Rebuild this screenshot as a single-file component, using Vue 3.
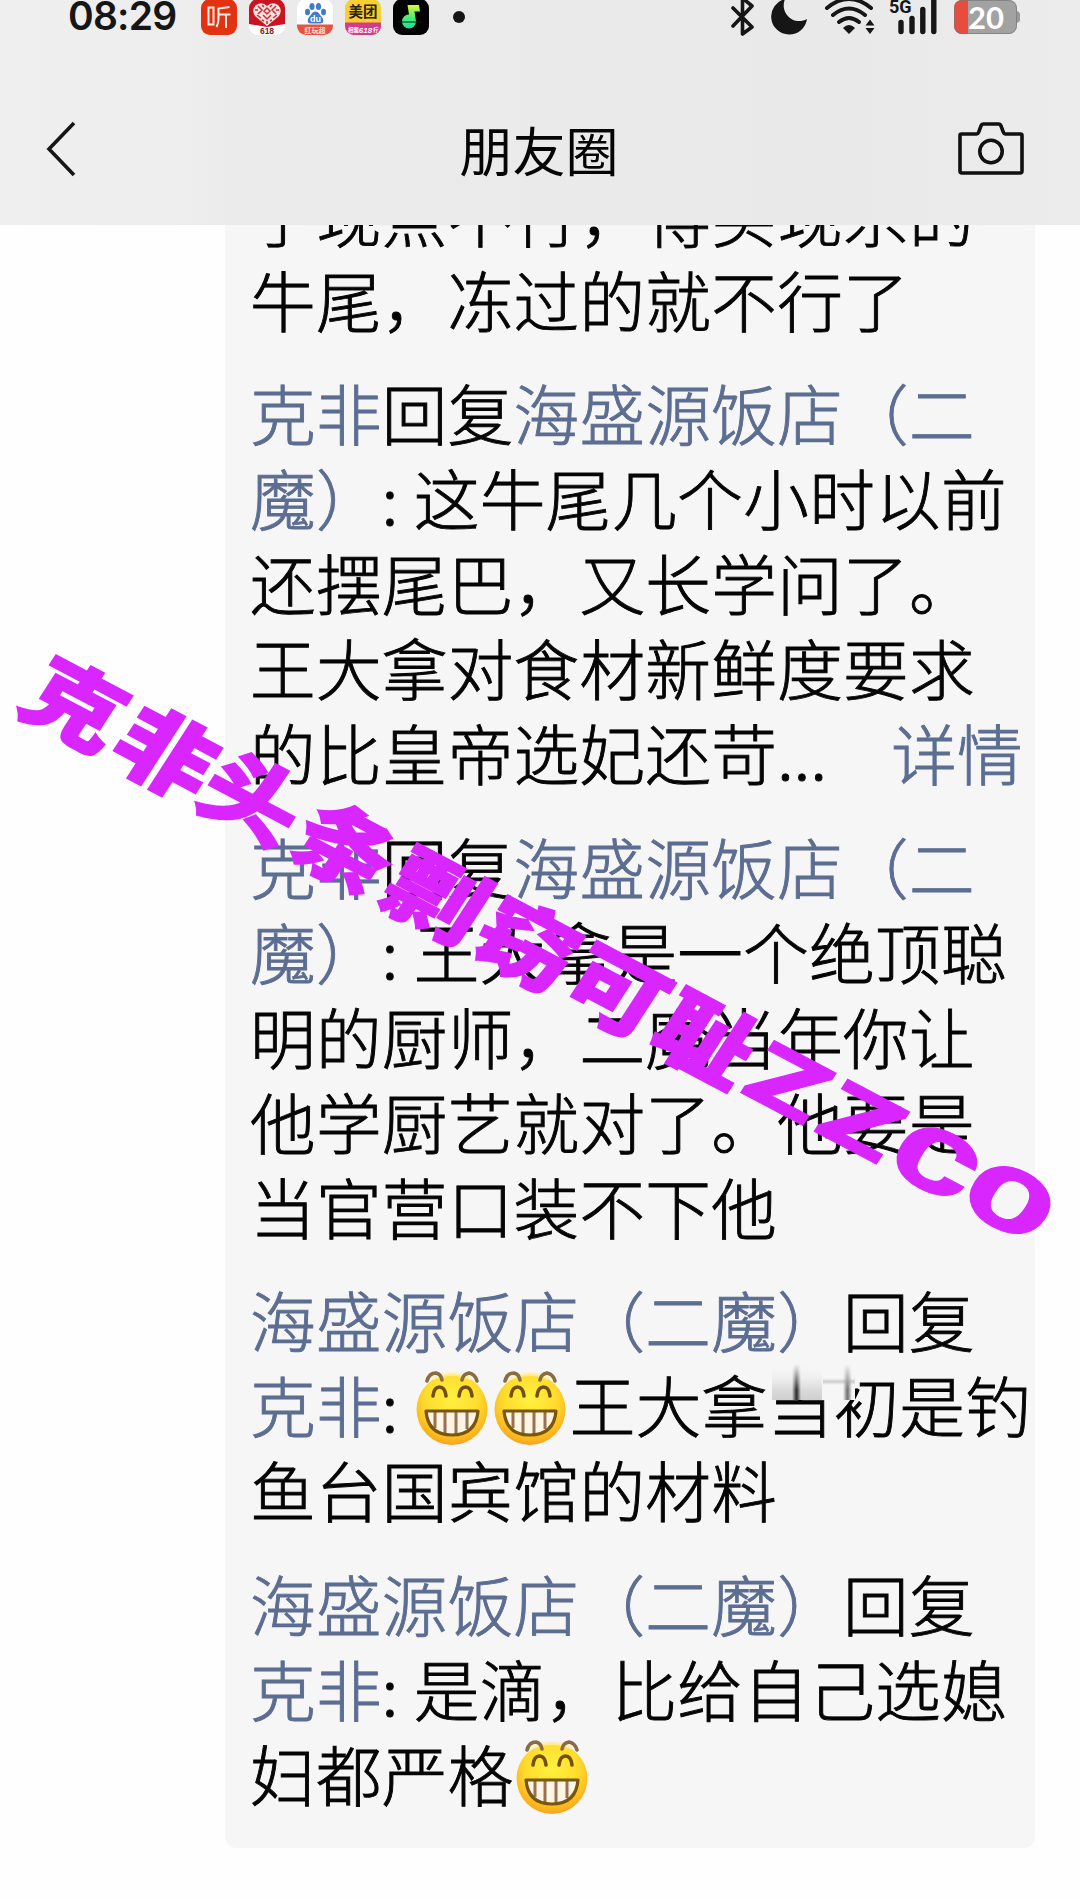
<script setup>
const comments = [
  {
    id: 1,
    lines: [
      [{ t: '了现点不行，得买现杀的' }],
      [{ t: '牛尾，冻过的就不行了' }]
    ]
  },
  {
    id: 2,
    lines: [
      [{ t: '克非', type: 'name' }, { t: '回复' }, { t: '海盛源饭店（二', type: 'name' }],
      [{ t: '魔）', type: 'name' }, { t: ':', type: 'colon' }, { t: '这牛尾几个小时以前' }],
      [{ t: '还摆尾巴，又长学问了。' }],
      [{ t: '王大拿对食材新鲜度要求' }],
      [{ t: '的比皇帝选妃还苛' }, { t: '...', type: 'dots' }, { t: '详情', type: 'more' }]
    ]
  },
  {
    id: 3,
    lines: [
      [{ t: '克非', type: 'name' }, { t: '回复' }, { t: '海盛源饭店（二', type: 'name' }],
      [{ t: '魔）', type: 'name' }, { t: ':', type: 'colon' }, { t: '王大拿是一个绝顶聪' }],
      [{ t: '明的厨师，二魔当年你让' }],
      [{ t: '他学厨艺就对了。他要是' }],
      [{ t: '当官营口装不下他' }]
    ]
  },
  {
    id: 4,
    lines: [
      [{ t: '海盛源饭店（二魔）', type: 'name' }, { t: '回复' }],
      [{ t: '克非', type: 'name' }, { t: ':', type: 'colon' }, { type: 'emoji' }, { type: 'emoji' }, { t: '王大拿' }, { t: '当初', type: 'smudge' }, { t: '是钓' }],
      [{ t: '鱼台国宾馆的材料' }]
    ]
  },
  {
    id: 5,
    lines: [
      [{ t: '海盛源饭店（二魔）', type: 'name' }, { t: '回复' }],
      [{ t: '克非', type: 'name' }, { t: ':', type: 'colon' }, { t: '是滴，比给自己选媳' }],
      [{ t: '妇都严格' }, { type: 'emoji' }]
    ]
  }
]

// distance of each glyph along the watermark's baseline
const watermark = [
  { t: '克', x: 0 },
  { t: '非', x: 103 },
  { t: '头', x: 201 },
  { t: '条', x: 306 },
  { t: '剽', x: 409 },
  { t: '窃', x: 512 },
  { t: '可', x: 613 },
  { t: '耻', x: 714 },
  { t: 'Z', x: 807, latin: true },
  { t: 'Z', x: 890, latin: true },
  { t: 'C', x: 974, latin: true },
  { t: 'O', x: 1058, latin: true }
]
</script>

<template>
  <div class="screen">
    <header class="top">
      <div class="status">
        <span class="time">08:29</span>
        <div class="apps">
          <svg class="app" viewBox="0 0 36 36">
            <rect width="36" height="36" rx="9" fill="#e23212" />
            <path d="M7.500 8.500h5v17h-5zM28.500 8L17.500 9.500V20q0 4-2 8M17.500 15.500h12M25 15.500V29" fill="none" stroke="#fff0e6" stroke-width="2" />
          </svg>
          <svg class="app" viewBox="0 0 36 36">
            <rect width="36" height="36" rx="9" fill="#fff" />
            <path d="M0 25V9a9 9 0 0 1 9-9h18a9 9 0 0 1 9 9v16L18 28z" fill="#c91421" />
            <path d="M18 27L6 17Q2 11 7 6q6-4 11 1 5-5 11-1 5 5 1 11z" fill="#fbe4df" />
            <path d="M9 7l4 4-4 4M27 7l-4 4 4 4M14 16l4 4 4-4M18 22v3M8 16l4 3M28 16l-4 3M15 12l3-3 3 3-3 3zM13 6l2 2M23 6l-2 2M6 11h3M30 11h-3M13 21l2 1M23 21l-2 1" fill="none" stroke="#cf2a35" stroke-width="1.500" />
            <text x="18" y="34.500" class="tiny" font-size="8.500" fill="#7c1b1b">618</text>
          </svg>
          <svg class="app" viewBox="0 0 36 36">
            <rect width="36" height="36" rx="9" fill="#fff" />
            <g fill="#3f7cd0">
              <ellipse cx="10.500" cy="13" rx="2.500" ry="3.200" />
              <ellipse cx="15" cy="7.500" rx="2.600" ry="3.500" />
              <ellipse cx="21.500" cy="7.500" rx="2.600" ry="3.500" />
              <ellipse cx="26.500" cy="13" rx="2.500" ry="3.200" />
              <path d="M18.500 12.500c3 0 4 3 6 5s3 7-1 7h-10c-4 0-3-5-1-7s3-5 6-5z" />
            </g>
            <text x="18.500" y="23" class="tiny" font-size="9" fill="#fff">du</text>
            <path d="M0 25.500h36V27a9 9 0 0 1-9 9H9a9 9 0 0 1-9-9z" fill="#e45443" />
            <text x="18" y="34" class="tiny" font-size="7" fill="#ffe3d8">红玩超</text>
          </svg>
          <svg class="app" viewBox="0 0 36 36">
            <rect width="36" height="36" rx="9" fill="#f7cf33" />
            <text x="18" y="18" class="tiny" font-size="14.500" fill="#2c2208">美团</text>
            <path d="M0 23.500h36V27a9 9 0 0 1-9 9H9a9 9 0 0 1-9-9z" fill="#d43a8c" />
            <text x="8.500" y="33" class="tiny" font-size="5.500" fill="#fff">相聚</text>
            <text x="20.500" y="34" class="tiny" font-size="8" font-style="italic" fill="#fff">618</text>
            <text x="31" y="33" class="tiny" font-size="5.500" fill="#fff">疗</text>
          </svg>
          <svg class="app" viewBox="0 0 36 36">
            <defs>
              <linearGradient id="note" x1="0" y1="0" x2="0" y2="1">
                <stop offset="0" stop-color="#dcf53a" />
                <stop offset="0.550" stop-color="#46ee77" />
                <stop offset="1" stop-color="#18e0a0" />
              </linearGradient>
            </defs>
            <rect width="36" height="36" rx="9" fill="#030303" />
            <path d="M14.500 6h11.500l1 6.500h-5.500l1.500 10a7 7 0 1 1-7-7z" fill="url(#note)" />
            <path d="M6 23h22" stroke="#062c16" stroke-width="1" />
          </svg>
        </div>
        <span class="dot"></span>
        <svg class="system" viewBox="725 0 300 38">
          <path d="M733 8l19 19-9.500 7V-2l9.500 8-19 20" fill="none" stroke="#161616" stroke-width="3.600" stroke-linejoin="round" stroke-linecap="round" />
          <path d="M785-1a18 18 0 1 0 22 20c-7 4-16 2-20-4-4-5-4-11-2-16z" fill="#161616" />
          <g fill="none" stroke="#161616" stroke-width="4" stroke-linecap="round">
            <path d="M827 8q22-18 44 0" />
            <path d="M833 15q16-13 32 0" />
            <path d="M839 22q10-8 20 0" />
          </g>
          <path d="M843 28q6-6 12 0l-6 6z" fill="#161616" />
          <path d="M865.500 25.500l4.500-6 4.500 6zM865.500 28l4.500 6 4.500-6z" fill="#161616" />
          <text x="889" y="13" class="fiveg">5G</text>
          <path d="M901 22.500v9M912 18.500v13M922.800 9.500v22M933.800 0v31.500" stroke="#161616" stroke-width="5.400" stroke-linecap="round" />
          <rect x="954" y="0" width="63" height="34" rx="8" fill="#a2a2a2" />
          <path d="M968 0v34h-6a8 8 0 0 1-8-8V8a8 8 0 0 1 8-8z" fill="#e84c3d" />
          <rect x="954.500" y="0.500" width="62" height="33" rx="8" fill="none" stroke="#777" stroke-opacity="0.700" />
          <path d="M1017 11q3 1 3 3v6q0 2-3 3z" fill="#999" />
          <text x="986" y="28.500" class="level">20</text>
        </svg>
      </div>
      <div class="nav">
        <svg class="back" viewBox="0 0 32 56">
          <path d="M29 2L4 28l25 26" fill="none" stroke="#161616" stroke-width="3.600" />
        </svg>
        <h1 class="title">朋友圈</h1>
        <svg class="camera" viewBox="0 0 66 54">
          <path d="M3.500 12h15q1.500 0 2-1.500L23 4q.7-2 2.500-2h15q1.800 0 2.500 2l2.500 6.500q.5 1.500 2 1.500h15q1.500 0 1.500 1.500V49q0 2-2 2H4q-2 0-2-2V13.500Q2 12 3.500 12z" fill="none" stroke="#111" stroke-width="3.600" />
          <circle cx="33" cy="29.500" r="11.200" fill="none" stroke="#111" stroke-width="3.600" />
        </svg>
      </div>
    </header>

    <main class="feed">
      <section class="panel">
        <div v-for="comment in comments" :key="comment.id" class="comment">
          <div v-for="(line, i) in comment.lines" :key="i" class="line">
            <template v-for="(part, j) in line" :key="j">
              <svg v-if="part.type === 'emoji'" class="emoji" viewBox="0 0 78 78">
                <defs>
                  <radialGradient id="face" cx="0.500" cy="0.350" r="0.680">
                    <stop offset="0" stop-color="#fff13e" />
                    <stop offset="0.550" stop-color="#ffdc2e" />
                    <stop offset="0.850" stop-color="#fbb51e" />
                    <stop offset="1" stop-color="#ef9d20" />
                  </radialGradient>
                </defs>
                <circle cx="36" cy="39.500" r="35.500" fill="url(#face)" />
                <path d="M18 8q18-8 36 0" fill="none" stroke="#ffefb0" stroke-width="4" stroke-linecap="round" opacity="0.700" />
                <g fill="none" stroke="#72500f" stroke-width="3.600" stroke-linecap="round">
                  <path d="M11 11Q13 3 20 3q5 1 6 7" stroke="#8a6c43" />
                  <path d="M46 10q1-6 7-7 6 1 8 8" stroke="#8a6c43" />
                  <path d="M17 26q1-9 6.500-9T30 26" />
                  <path d="M43 26q1-9 6.500-9T56 26" />
                </g>
                <path d="M10 41h52q-2 24-26 24T10 41z" fill="#fff5e5" />
                <path d="M19 42v16M29 42v22M40 42v22M51 42v17" stroke="#987150" stroke-width="3" />
                <path d="M10 41h52q-2 24-26 24T10 41z" fill="none" stroke="#7a560d" stroke-width="3.200" stroke-linejoin="round" />
              </svg>
              <span v-else :class="part.type">{{ part.t }}</span>
            </template>
          </div>
        </div>
      </section>
    </main>

    <svg class="watermark" viewBox="0 0 1080 1899">
      <g transform="translate(75 705) rotate(27.900) skewX(-5)">
        <text
          v-for="(glyph, i) in watermark"
          :key="i"
          :transform="glyph.latin ? `translate(${glyph.x} 31) scale(1.45 1)` : `translate(${glyph.x} 32) scale(1.14 1)`"
          :class="{ latin: glyph.latin }"
        >{{ glyph.t }}</text>
      </g>
    </svg>
  </div>
</template>

<style>
body {
  margin: 0;
  background: #fefefe;
}
</style>

<style scoped>
.screen {
  position: relative;
  width: 1080px;
  height: 1899px;
  overflow: hidden;
  display: flex;
  flex-direction: column;
  background: #fefefe;
  font-family: "Noto Sans CJK SC", sans-serif;
  color: #050505;
}

.top {
  flex: none;
  height: 225px;
  background: linear-gradient(90deg, #efefef 0, #ededed 200px, #ebebeb 230px, #e9e9e9 850px, #ececec 1080px);
  position: relative;
  z-index: 1;
}

.status {
  display: flex;
  height: 70px;
  align-items: flex-start;
}

.time {
  width: 132px;
  margin-left: 68px;
  font: 600 39px/31px Inter, sans-serif;
  letter-spacing: -0.8px;
  color: #161616;
}

.apps {
  display: flex;
  gap: 12px;
  margin: -1px 0 0 1px;
}

.app {
  width: 36px;
  height: 36px;
}

.tiny {
  font-family: "Liberation Sans", "Noto Sans CJK SC", sans-serif;
  font-weight: 700;
  text-anchor: middle;
}

.dot {
  width: 12px;
  height: 12px;
  margin: 11px 0 0 24px;
  border-radius: 50%;
  background: #161616;
}

.system {
  width: 300px;
  height: 38px;
  margin-left: 260px;
}

.fiveg {
  font: 700 18px Roboto, sans-serif;
  fill: #161616;
}

.level {
  font: 700 31px Lato, sans-serif;
  fill: #fff;
  text-anchor: middle;
}

.nav {
  display: flex;
  align-items: center;
  justify-content: space-between;
  height: 100px;
  margin-top: 29px;
  padding: 0 56px 0 45px;
}

.back {
  width: 32px;
  height: 56px;
}

.title {
  margin: 0 0 0 43px;
  font-size: 53px;
  line-height: 80px;
  font-weight: 400;
}

.camera {
  width: 66px;
  height: 54px;
}

.feed {
  flex: none;
  display: flex;
  padding-left: 225px;
}

.panel {
  width: 785px;
  height: 1677px;
  margin-top: -54px;
  padding-left: 25px;
  border-radius: 0 0 12px 12px;
  background: #f6f6f6;
}

.comment {
  margin-bottom: 28.4px;
}

.line {
  display: flex;
  height: 85px;
  line-height: 86px;
  font-size: 65.6px;
  font-weight: 300;
  -webkit-text-stroke: 0.9px currentColor;
  letter-spacing: 0.3px;
  white-space: nowrap;
  text-spacing-trim: space-all;
}

.name,
.more {
  color: #5c6d92;
}

.colon {
  width: 32px;
}

.dots {
  width: 114px;
}

.emoji {
  position: relative;
  left: 2px;
  flex: none;
  width: 78px;
  height: 78px;
  margin-top: 9px;
}

.smudge {
  position: relative;
}

/* smeared patch over the upper half of the two characters */
.smudge::before {
  content: "";
  position: absolute;
  left: 0;
  top: 3px;
  width: 88px;
  height: 36px;
  background:
    linear-gradient(#f6f6f6, rgba(246, 246, 246, 0)) 0 0 / 100% 26px no-repeat,
    linear-gradient(90deg, transparent, #333 45%, #333 55%, transparent) 25px 0 / 9px 36px no-repeat,
    linear-gradient(90deg, transparent, #777 45%, #777 55%, transparent) 76px 0 / 9px 36px no-repeat,
    linear-gradient(transparent, #bbb, transparent) 56px 14px / 32px 7px no-repeat,
    linear-gradient(#f6f6f6, #cfcfcf) 5px 0 / 50px 36px no-repeat,
    #f6f6f6;
}

.watermark {
  position: absolute;
  left: 0;
  top: 0;
  width: 1080px;
  height: 1899px;
  z-index: 2;
}

.watermark text {
  font-family: "Noto Sans CJK SC", sans-serif;
  font-size: 86px;
  font-weight: 900;
  text-anchor: middle;
  fill: #d926ff;
  stroke: #d926ff;
  stroke-width: 2px;
}

.watermark .latin {
  font-family: Roboto, sans-serif;
  font-size: 87px;
  stroke-width: 1px;
}
</style>
